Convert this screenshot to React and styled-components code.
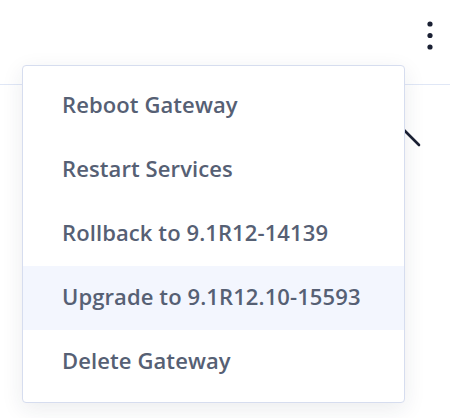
import React from 'react';
import styled, { createGlobalStyle } from 'styled-components';

const GlobalStyle = createGlobalStyle`
  body {
    margin: 0;
    background: #fff;
    font-family: 'Open Sans', 'Liberation Sans', sans-serif;
  }
`;

const Page = styled.div`
  position: relative;
  width: 450px;
  height: 418px;
  overflow: hidden;
`;

const Header = styled.div`
  display: flex;
  justify-content: flex-end;
  align-items: flex-start;
  height: 85px;
  box-sizing: border-box;
  padding: 21px 17px 0 0;
  border-bottom: 1px solid #e0e7f6;
`;

const KebabButton = styled.button`
  display: flex;
  padding: 0;
  border: 0;
  background: none;
  cursor: pointer;
`;

const Body = styled.div`
  display: flex;
  justify-content: flex-end;
  padding: 42px 29px 0 0;
`;

const Menu = styled.ul`
  position: absolute;
  top: 65px;
  left: 22px;
  width: 383px;
  box-sizing: border-box;
  margin: 0;
  padding: 8px 0;
  list-style: none;
  background: #fff;
  border: 1px solid #d6ddef;
  border-radius: 4px;
  box-shadow: 0 6px 22px rgba(30, 40, 70, 0.09);
`;

const MenuItem = styled.li`
  display: flex;
  align-items: center;
  height: 64px;
  padding: 0 0 4px 39px;
  box-sizing: border-box;
  font-size: 22px;
  font-weight: 600;
  letter-spacing: 0.1px;
  color: #566074;
  background: ${(p) => (p.$active ? '#f3f6fe' : 'transparent')};
  cursor: pointer;
`;

const items = [
  'Reboot Gateway',
  'Restart Services',
  'Rollback to 9.1R12-14139',
  'Upgrade to 9.1R12.10-15593',
  'Delete Gateway',
];

function Kebab() {
  return (
    <svg width="6" height="29" viewBox="0 0 6 29">
      <circle cx="3" cy="3" r="2.6" fill="#1a2033" />
      <circle cx="3" cy="14.5" r="2.6" fill="#1a2033" />
      <circle cx="3" cy="26" r="2.6" fill="#1a2033" />
    </svg>
  );
}

function ChevronUp() {
  return (
    <svg width="36" height="20" viewBox="0 0 36 20">
      <polyline
        points="2,18 18,2 34,18"
        fill="none"
        stroke="#1a2033"
        strokeWidth="2.6"
        strokeLinecap="round"
        strokeLinejoin="round"
      />
    </svg>
  );
}

export default function App() {
  return (
    <Page>
      <GlobalStyle />
      <Header>
        <KebabButton aria-label="More actions">
          <Kebab />
        </KebabButton>
      </Header>
      <Body>
        <ChevronUp />
      </Body>
      <Menu>
        {items.map((label, i) => (
          <MenuItem key={label} $active={i === 3}>
            {label}
          </MenuItem>
        ))}
      </Menu>
    </Page>
  );
}
